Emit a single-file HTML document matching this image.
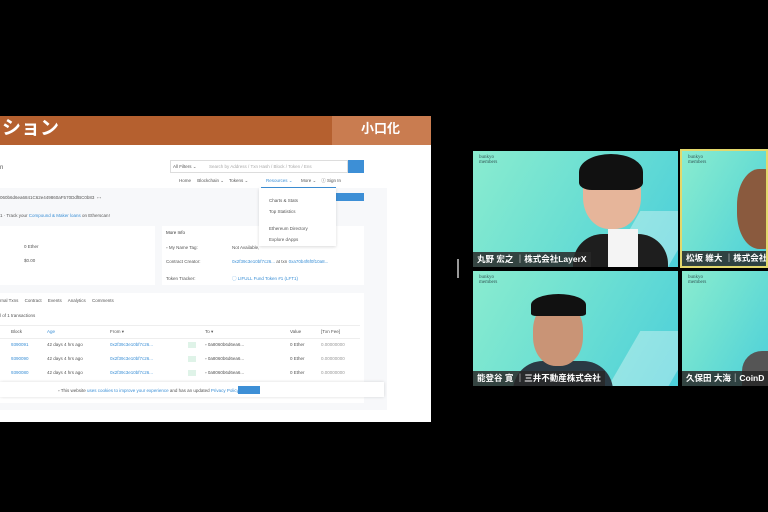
<!DOCTYPE html>
<html><head><meta charset="utf-8"><style>
*{margin:0;padding:0;box-sizing:border-box}
body{width:768px;height:512px;background:#000;position:relative;overflow:hidden;font-family:"Liberation Sans","Noto Sans CJK JP",sans-serif}
.a{position:absolute}
.t{position:absolute;font-size:4.5px;color:#555;white-space:nowrap}
.l{color:#3a8fd6}
.tile{position:absolute;overflow:hidden;background:linear-gradient(120deg,#8aeccf 0%,#6ee0d2 45%,#4ccfda 100%)}
.lab{position:absolute;bottom:0;left:0;background:rgba(40,40,40,.85);color:#fff;font-size:8.5px;line-height:15px;padding:0 4px;white-space:nowrap;font-weight:bold}
.logo{position:absolute;left:6px;top:4px;font-family:"Liberation Serif",serif;font-size:5px;line-height:5px;color:#355}
</style></head><body>
<div class="a" style="left:0;top:116px;width:431px;height:306px;background:#fff"></div>
<div class="a" style="left:0;top:116px;width:332px;height:29px;background:#b5602f"></div>
<div class="a" style="left:332px;top:116px;width:99px;height:29px;background:#c97c50"></div>
<div class="a" style="left:2px;top:117px;color:#fff;font-size:19px;font-weight:bold;line-height:24px">ション</div>
<div class="a" style="left:361px;top:120px;color:#fff;font-size:13px;font-weight:bold;line-height:18px">小口化</div>
<div class="a" style="left:0;top:188px;width:387px;height:222px;background:#f7f8fa"></div>
<div class="t" style="left:0;top:165px;font-size:6px">n</div>
<div class="a" style="left:170px;top:160px;width:178px;height:13px;border:1px solid #ddd;background:#fff"></div>
<div class="t" style="left:173px;top:164px">All Filters ⌄</div>
<div class="t" style="left:209px;top:164px;color:#aaa">Search by Address / Txn Hash / Block / Token / Ens</div>
<div class="a" style="left:348px;top:160px;width:16px;height:13px;background:#3d8fd6"></div>
<div class="t" style="left:179px;top:178px">Home &nbsp;&nbsp;&nbsp; Blockchain ⌄ &nbsp;&nbsp; Tokens ⌄</div>
<div class="t l" style="left:266px;top:178px">Resources ⌄</div>
<div class="t" style="left:301px;top:178px">More ⌄ &nbsp;&nbsp; ⓘ Sign In</div>
<div class="a" style="left:261px;top:187px;width:75px;height:1px;background:#3d8fd6"></div>
<div class="t" style="left:0;top:195px">060b6d6ea6841C62e449860aF570DdfBC0b83 &nbsp;▫ ▫</div>
<div class="t" style="left:0;top:213px">1 · Track your <span class="l">Compound &amp; Maker loans</span> on Etherscan!</div>
<div class="a" style="left:336px;top:193px;width:28px;height:8px;background:#3d8fd6"></div>
<div class="a" style="left:0;top:226px;width:155px;height:59px;background:#fff"></div>
<div class="t" style="left:24px;top:244px">0 Ether</div>
<div class="t" style="left:24px;top:258px">$0.00</div>
<div class="a" style="left:162px;top:226px;width:202px;height:59px;background:#fff"></div>
<div class="t" style="left:166px;top:230px;color:#333">More Info</div>
<div class="t" style="left:166px;top:245px">▫ My Name Tag:</div><div class="t" style="left:232px;top:245px">Not Available,</div>
<div class="t" style="left:166px;top:259px">Contract Creator:</div><div class="t l" style="left:232px;top:259px">0x2f39c3e10bf7c26... <span style="color:#555">at txn</span> 0xa70b4f6f0f10a8...</div>
<div class="t" style="left:166px;top:276px">Token Tracker:</div><div class="t l" style="left:232px;top:276px">◯ LIFULL Fund Token #1 (LFT1)</div>
<div class="a" style="left:259px;top:188px;width:77px;height:58px;background:#fff;box-shadow:0 1px 3px rgba(0,0,0,.15)"></div>
<div class="t" style="left:269px;top:198px">Charts &amp; Stats</div>
<div class="t" style="left:269px;top:209px">Top Statistics</div>
<div class="t" style="left:269px;top:226px">Ethereum Directory</div>
<div class="t" style="left:269px;top:237px">Explore dApps</div>
<div class="a" style="left:0;top:293px;width:364px;height:110px;background:#fff"></div>
<div class="t" style="left:0;top:298px">rnal Txns &nbsp;&nbsp;&nbsp; Contract &nbsp;&nbsp;&nbsp; Events &nbsp;&nbsp;&nbsp; Analytics &nbsp;&nbsp;&nbsp; Comments</div>
<div class="t" style="left:0;top:313px">l of 1 transactions</div>
<div class="a" style="left:0;top:325px;width:360px;height:1px;background:#eee"></div>
<div class="t" style="left:11px;top:329px">Block</div><div class="t l" style="left:47px;top:329px">Age</div><div class="t" style="left:110px;top:329px">From ▾</div><div class="t" style="left:205px;top:329px">To ▾</div><div class="t" style="left:290px;top:329px">Value</div><div class="t" style="left:321px;top:329px">[Txn Fee]</div>
<div class="a" style="left:0;top:338px;width:360px;height:1px;background:#eee"></div>
<div class="t l" style="left:11px;top:342px">9390091</div><div class="t" style="left:47px;top:342px">42 days 4 hrs ago</div><div class="t l" style="left:110px;top:342px">0x2f39c3e10bf7c26...</div><div class="a" style="left:188px;top:342px;width:8px;height:6px;background:#dff3e8"></div><div class="t" style="left:205px;top:342px">▫ 0a8060b6d6ea6...</div><div class="t" style="left:290px;top:342px">0 Ether</div><div class="t" style="left:321px;top:342px;color:#999">0.00000000</div>
<div class="t l" style="left:11px;top:356px">9390090</div><div class="t" style="left:47px;top:356px">42 days 4 hrs ago</div><div class="t l" style="left:110px;top:356px">0x2f39c3e10bf7c26...</div><div class="a" style="left:188px;top:356px;width:8px;height:6px;background:#dff3e8"></div><div class="t" style="left:205px;top:356px">▫ 0a8060b6d6ea6...</div><div class="t" style="left:290px;top:356px">0 Ether</div><div class="t" style="left:321px;top:356px;color:#999">0.00000000</div>
<div class="t l" style="left:11px;top:370px">9390080</div><div class="t" style="left:47px;top:370px">42 days 4 hrs ago</div><div class="t l" style="left:110px;top:370px">0x2f39c3e10bf7c26...</div><div class="a" style="left:188px;top:370px;width:8px;height:6px;background:#dff3e8"></div><div class="t" style="left:205px;top:370px">▫ 0a8060b6d6ea6...</div><div class="t" style="left:290px;top:370px">0 Ether</div><div class="t" style="left:321px;top:370px;color:#999">0.00000000</div>
<div class="a" style="left:0;top:382px;width:384px;height:15px;background:#fff;box-shadow:0 0 3px rgba(0,0,0,.15)"></div>
<div class="t" style="left:58px;top:388px">▫ This website <span class="l">uses cookies to improve your experience</span> and has an updated <span class="l">Privacy Policy.</span></div>
<div class="a" style="left:238px;top:386px;width:22px;height:8px;background:#3d8fd6"></div>
<div class="a" style="left:457px;top:259px;width:2px;height:19px;background:#999"></div>
<div class="tile" style="left:473px;top:151px;width:205px;height:116px">
 <div class="logo">bunkyo<br>members</div>
 <div class="a" style="left:150px;top:60px;width:60px;height:60px;background:#fff;opacity:.35;transform:skewX(-30deg)"></div>
 <div class="a" style="left:100px;top:83px;width:95px;height:40px;background:#1e1e1e;border-radius:30px 30px 0 0"></div>
 <div class="a" style="left:135px;top:78px;width:30px;height:40px;background:#f4f4f4"></div>
 <div class="a" style="left:110px;top:8px;width:58px;height:70px;background:#e6b59a;border-radius:45%"></div>
 <div class="a" style="left:106px;top:3px;width:64px;height:36px;background:#111;border-radius:50% 50% 20% 20%"></div>
 <div class="lab">丸野 宏之 ｜株式会社LayerX</div>
</div>
<div class="tile" style="left:680px;top:149px;width:88px;height:119px;border:2px solid #e3d86c">
 <div class="logo">bunkyo<br>members</div>
 <div class="a" style="left:55px;top:18px;width:50px;height:80px;background:#8a5a3e;border-radius:45%"></div>
 <div class="lab">松坂 維大 ｜株式会社</div>
</div>
<div class="tile" style="left:473px;top:271px;width:205px;height:115px">
 <div class="logo">bunkyo<br>members</div>
 <div class="a" style="left:150px;top:60px;width:60px;height:60px;background:#fff;opacity:.35;transform:skewX(-30deg)"></div>
 <div class="a" style="left:40px;top:90px;width:100px;height:40px;background:#2a3a44;border-radius:30px 30px 0 0"></div>
 <div class="a" style="left:60px;top:30px;width:50px;height:65px;background:#c99476;border-radius:45%"></div>
 <div class="a" style="left:58px;top:23px;width:55px;height:22px;background:#111;border-radius:50% 50% 10% 10%"></div>
 <div class="lab">能登谷 寛 ｜三井不動産株式会社</div>
</div>
<div class="tile" style="left:682px;top:271px;width:86px;height:115px">
 <div class="logo">bunkyo<br>members</div>
 <div class="a" style="left:60px;top:80px;width:40px;height:40px;background:#555;border-radius:20px 0 0 0"></div>
 <div class="lab">久保田 大海｜CoinD</div>
</div>
</body></html>
